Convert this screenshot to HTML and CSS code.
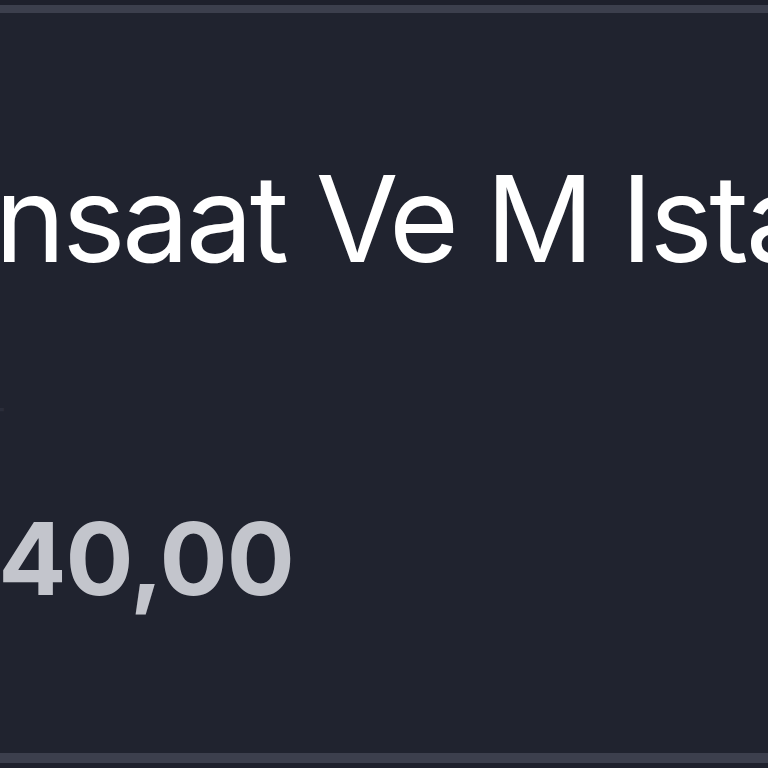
FILE: index.html
```html
<!DOCTYPE html>
<html>
<head>
<meta charset="utf-8">
<link rel="stylesheet" href="styles.css">
</head>
<body>
<div class="strip"></div>
<div class="card">
  <div class="title">Insaat Ve M Istanbul</div>
  <div class="label">T</div>
  <div class="amount">1.240,00</div>
</div>
</body>
</html>
```
FILE: styles.css
```css
html, body {
  margin: 0;
  padding: 0;
  background: #1e202c;
  width: 768px;
  height: 768px;
  overflow: hidden;
}
.strip {
  height: 5px;
  background: #1e202c;
}
.card {
  height: 758px;
  box-sizing: border-box;
  background: #20232f;
  border-top: 8px solid #3c3f4d;
  border-bottom: 10px solid #3c3f4d;
  overflow: hidden;
  font-family: Inter, "Noto Sans", sans-serif;
  display: flex;
  flex-direction: column;
}
.title {
  white-space: nowrap;
  color: #ffffff;
  font-size: 120px;
  font-weight: 400;
  letter-spacing: -3.5px;
  line-height: 1;
  margin-top: 146px;
  margin-left: -34px;
}
.label {
  color: #2a2d3a;
  font-size: 40px;
  line-height: 1;
  margin-top: 124px;
  margin-left: -20px;
}
.amount {
  white-space: nowrap;
  color: #c3c5cc;
  font-size: 101px;
  font-weight: 700;
  letter-spacing: -1px;
  line-height: 1;
  margin-top: 65px;
  margin-left: -138px;
}
```
